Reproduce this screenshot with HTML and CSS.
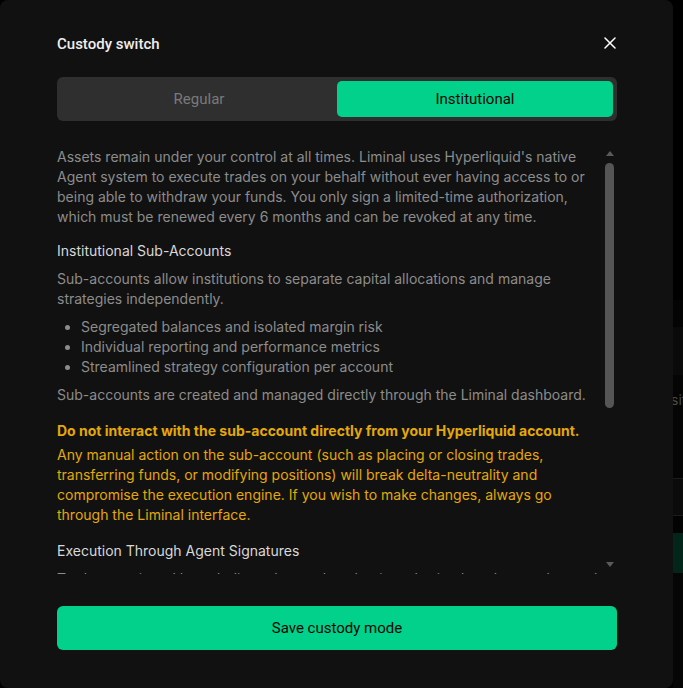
FILE: index.html
```html
<!DOCTYPE html>
<html lang="en">
<head>
<meta charset="utf-8">
<title>Custody switch</title>
<link rel="stylesheet" href="styles.css">
</head>
<body>
<div class="backdrop">
  <div class="bg-col">
    <div class="bg-row bg-a"></div>
    <div class="bg-row bg-b"></div>
    <div class="bg-row bg-c"><span class="bg-text">sit</span></div>
    <div class="bg-row bg-d"></div>
    <div class="bg-row bg-e"></div>
    <div class="bg-row bg-f"></div>
    <div class="bg-row bg-g"></div>
  </div>
</div>

<div class="modal" role="dialog" aria-label="Custody switch">
  <div class="modal-head">
    <h2 class="modal-title">Custody switch</h2>
    <button class="close-btn" aria-label="Close">
      <svg width="12" height="12" viewBox="0 0 12 12" fill="none" stroke="#ffffff" stroke-width="1.5" stroke-linecap="round">
        <path d="M1 1 L11 11 M11 1 L1 11"/>
      </svg>
    </button>
  </div>

  <div class="toggle">
    <button class="toggle-opt">Regular</button>
    <button class="toggle-opt active">Institutional</button>
  </div>

  <div class="scroll-wrap">
    <div class="scroll">
      <p class="para">Assets remain under your control at all times. Liminal uses Hyperliquid's native Agent system to execute trades on your behalf without ever having access to or being able to withdraw your funds. You only sign a limited-time authorization, which must be renewed every 6 months and can be revoked at any time.</p>

      <section class="section">
        <h3 class="heading">Institutional Sub-Accounts</h3>
        <p class="para">Sub-accounts allow institutions to separate capital allocations and manage strategies independently.</p>
        <ul class="list">
          <li>Segregated balances and isolated margin risk</li>
          <li>Individual reporting and performance metrics</li>
          <li>Streamlined strategy configuration per account</li>
        </ul>
        <p class="para">Sub-accounts are created and managed directly through the Liminal dashboard.</p>
      </section>

      <section class="warning">
        <p class="warn-title">Do not interact with the sub-account directly from your Hyperliquid account.</p>
        <p class="warn-text">Any manual action on the sub-account (such as placing or closing trades, transferring funds, or modifying positions) will break delta-neutrality and compromise the execution engine. If you wish to make changes, always go through the Liminal interface.</p>
      </section>

      <section class="section">
        <h3 class="heading">Execution Through Agent Signatures</h3>
        <p class="para">Trades are signed by a dedicated agent key that is authorized to place and cancel orders on your sub-account only. The agent cannot transfer or withdraw funds, and its permissions expire automatically.</p>
        <ul class="list">
          <li>Orders are executed with your own margin and positions</li>
          <li>Every action is recorded and visible on-chain</li>
          <li>Authorization can be revoked instantly from Hyperliquid</li>
        </ul>
        <p class="para">Once the authorization expires, no further trades can be placed until you renew it from the Liminal dashboard.</p>
      </section>
    </div>
    <div class="scrollbar" aria-hidden="true">
      <span class="arrow arrow-up"></span>
      <span class="thumb"></span>
      <span class="arrow arrow-down"></span>
    </div>
  </div>

  <button class="save-btn">Save custody mode</button>
</div>
</body>
</html>
```

FILE: styles.css
```css
* {
  box-sizing: border-box;
}

html, body {
  margin: 0;
  padding: 0;
}

body {
  width: 683px;
  height: 688px;
  overflow: hidden;
  background: #000000;
  font-family: "Inter", "Liberation Sans", sans-serif;
}

/* page behind the dialog */
.backdrop {
  display: flex;
  justify-content: flex-end;
  height: 688px;
}

.bg-col {
  width: 10px;
  display: flex;
  flex-direction: column;
  padding-top: 300px;
}

.bg-row {
  flex: none;
}

.bg-a { height: 27px; background: #040404; }
.bg-b { height: 48px; background: #0a0a0a; }
.bg-c {
  height: 103px;
  background: #050505;
  padding-top: 14px;
  overflow: hidden;
}
.bg-text {
  font-family: "Inter", sans-serif;
  font-size: 14px;
  color: #4a4a4a;
  margin-left: -2px;
}
.bg-d { height: 38px; background: #0b0b0b; border-top: 1px solid #1c1c1c; border-bottom: 1px solid #1c1c1c; }
.bg-e { height: 17px; background: #030303; }
.bg-f { height: 40px; background: #03261b; }
.bg-g { height: 115px; background: #060606; }

/* dialog */
.modal {
  position: absolute;
  left: 0;
  top: 0;
  width: 673px;
  height: 688px;
  background: #111111;
  border-radius: 8px;
  padding: 34px 56px 38px 57px;
  display: flex;
  flex-direction: column;
}

.modal-head {
  display: flex;
  align-items: center;
  justify-content: space-between;
  height: 20px;
}

.modal-title {
  margin: 0;
  font-family: "Roboto", "Liberation Sans", sans-serif;
  font-weight: 500;
  font-size: 15px;
  line-height: 20px;
  color: #eeeeee;
}

.close-btn {
  border: 0;
  background: none;
  padding: 0;
  margin-right: 1px;
  margin-top: -2px;
  width: 12px;
  height: 12px;
  display: flex;
  cursor: pointer;
}

.toggle {
  margin-top: 23px;
  height: 44px;
  background: #2f2f2f;
  border-radius: 6px;
  padding: 4px;
  display: grid;
  grid-template-columns: 1fr 1fr;
}

.toggle-opt {
  border: 0;
  background: transparent;
  border-radius: 5px;
  font-family: "Roboto", "Liberation Sans", sans-serif;
  font-size: 15px;
  color: #7a7a7a;
  cursor: pointer;
}

.toggle-opt.active {
  background: #02d18b;
  color: #050505;
}

.scroll-wrap {
  margin-top: 25px;
  height: 428px;
  display: flex;
}

.scroll {
  flex: 1;
  min-width: 0;
  overflow-y: scroll;
  scrollbar-width: none;
  padding-top: 1px;
}

.scroll::-webkit-scrollbar {
  display: none;
}

.scrollbar {
  width: 15px;
  flex: none;
  display: flex;
  flex-direction: column;
  align-items: center;
  padding: 5px 0 7px;
}

.arrow {
  width: 0;
  height: 0;
  border-left: 4.5px solid transparent;
  border-right: 4.5px solid transparent;
}

.arrow-up {
  border-bottom: 5px solid #5a5a5a;
}

.arrow-down {
  margin-top: auto;
  border-top: 5px solid #5a5a5a;
}

.thumb {
  margin-top: 7px;
  width: 9px;
  height: 245px;
  border-radius: 4.5px;
  background: #555555;
}

.para,
.warn-title,
.warn-text {
  margin: 0;
  font-size: 14px;
  line-height: 20px;
}

.para {
  color: #8c8c8c;
}

.section {
  margin-top: 14px;
  display: flex;
  flex-direction: column;
  gap: 8px;
}

.heading {
  margin: 0;
  font-size: 14px;
  line-height: 20px;
  font-weight: 400;
  color: #d8d8d8;
}

.list {
  margin: 0;
  padding-left: 24px;
  color: #8c8c8c;
  font-size: 14px;
  line-height: 20px;
}

.warning {
  margin-top: 16px;
  display: flex;
  flex-direction: column;
  gap: 4px;
}

.warning + .section {
  margin-top: 16px;
}

.warn-title {
  font-weight: 700;
  color: #e3a80a;
}

.warn-text {
  color: #e3a80a;
}

.save-btn {
  margin-top: 32px;
  height: 44px;
  flex: none;
  border: 0;
  border-radius: 6px;
  background: #02d18b;
  color: #050505;
  font-family: "Roboto", "Liberation Sans", sans-serif;
  font-size: 15px;
  font-weight: 400;
  cursor: pointer;
}
```
